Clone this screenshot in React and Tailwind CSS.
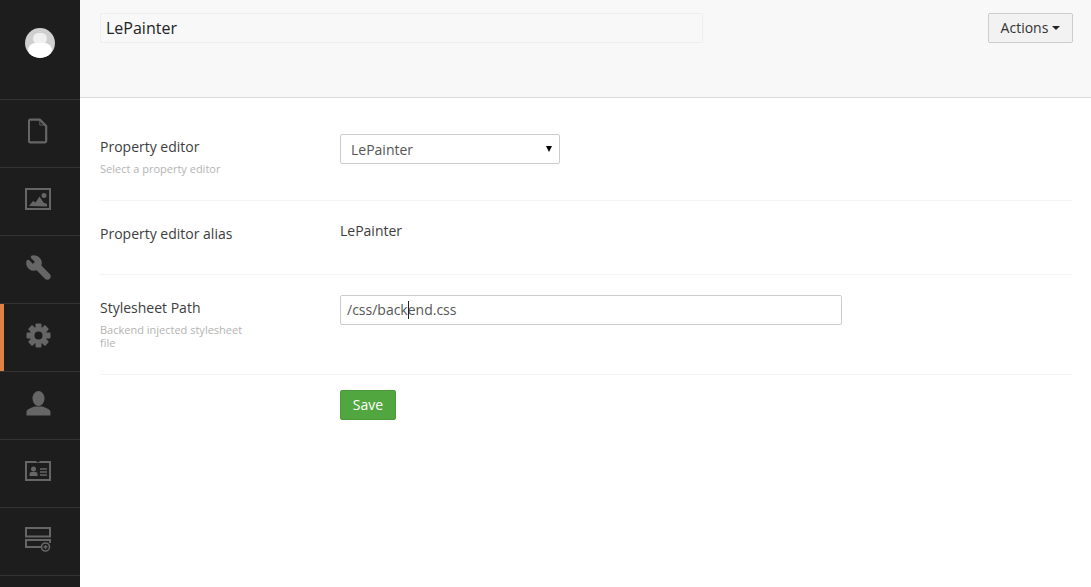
import React from "react";
import { Wrench } from "lucide-react";

const FileIcon = () => (
  <svg width="20" height="26" viewBox="0 0 22 28" fill="none" stroke="#666" strokeWidth="2.4">
    <path d="M2.500 1.500h10.500l7 7v16.500a1.500 1.500 0 0 1-1.500 1.500h-16a1.500 1.500 0 0 1-1.500-1.500v-22a1.500 1.500 0 0 1 1.500-1.500z" strokeLinejoin="round" />
    <path d="M13 2v5.500h6.500" strokeWidth="1" />
  </svg>
);

const ImageIcon = () => (
  <svg width="26" height="22" viewBox="0 0 26 22">
    <rect x="1" y="1" width="24" height="20" fill="none" stroke="#666" strokeWidth="2" />
    <circle cx="19" cy="7.500" r="2.500" fill="#666" />
    <path d="M4 18l4-5 2.500 1.500 4-6 4 6 3.500 1.500v2.500z" fill="#666" />
  </svg>
);

const CardIcon = () => (
  <svg width="26" height="20" viewBox="0 0 26 20">
    <rect x="1" y="1" width="24" height="18" fill="none" stroke="#666" strokeWidth="2" />
    <rect x="11.500" y="0" width="3" height="1.200" fill="#1d1d1d" />
    <circle cx="8.500" cy="8" r="2.500" fill="#666" />
    <path d="M4.500 15v-2a2 2 0 0 1 2-2h4a2 2 0 0 1 2 2v2z" fill="#666" />
    <path d="M15 8h7M15 11h7M15 14h7" stroke="#666" strokeWidth="1.600" />
  </svg>
);

const ServerAddIcon = () => (
  <svg width="26" height="25" viewBox="0 0 26 25">
    <rect x="1" y="1" width="24" height="8.500" fill="none" stroke="#666" strokeWidth="2" />
    <path d="M25 16v-3h-24v7h15" fill="none" stroke="#666" strokeWidth="2" />
    <circle cx="20.500" cy="20" r="4" fill="#1d1d1d" stroke="#666" strokeWidth="1.600" />
    <path d="M20.500 18v4M18.500 20h4" stroke="#666" strokeWidth="1.400" />
  </svg>
);

const GearIcon = () => (
  <svg width="25" height="25" viewBox="0 0 25 25" fill="#666">
    {[0, 45, 90, 135, 180, 225, 270, 315].map((deg) => (
      <rect key={deg} x="9.500" y="0.500" width="6" height="6" rx="1" transform={`rotate(${deg} 12.500 12.500)`} />
    ))}
    <circle cx="12.500" cy="12.500" r="8.500" />
    <circle cx="12.500" cy="12.500" r="4" fill="#1d1d1d" />
  </svg>
);

const PersonIcon = () => (
  <svg width="25" height="25" viewBox="0 0 25 25" fill="#666">
    <ellipse cx="12.500" cy="7.500" rx="6" ry="7.500" />
    <path d="M0.500 24.500v-3.500c0-3 5-4 8-5.500h8c3 1.500 8 2.500 8 5.500v3.500z" />
  </svg>
);

const navItems = [
  { icon: <FileIcon /> },
  { icon: <ImageIcon /> },
  { icon: <Wrench size={27} className="-scale-x-100" fill="#666" stroke="#666" strokeWidth={1.800} /> },
  { icon: <GearIcon />, active: true },
  { icon: <PersonIcon /> },
  { icon: <CardIcon /> },
  { icon: <ServerAddIcon /> },
];

function Sidebar() {
  return (
    <aside className="w-20 h-[587px] shrink-0 bg-[#1d1d1d] overflow-hidden">
      <div className="h-[99px] flex justify-center pt-[28px]">
        <div className="w-[30px] h-[30px] rounded-full bg-[#cfcfcf] overflow-hidden flex flex-col items-center">
          <div className="w-[14px] h-[14px] mt-[5px] rounded-full bg-[#f0f0f0]" />
          <div className="w-[24px] h-[20px] -mt-[1px] rounded-full bg-white" />
        </div>
      </div>
      {navItems.map((item, i) => (
        <div key={i} className="h-[68px] border-t border-[#333] flex">
          <div className={`w-1 ${item.active ? "bg-[#e08244]" : ""}`} />
          <div className="w-[68px] flex items-center justify-center pb-[5px]">{item.icon}</div>
        </div>
      ))}
      <div className="border-t border-[#333]" />
    </aside>
  );
}

function Row({ label, help, height, children }) {
  return (
    <div className={`flex border-b border-[#f4f4f4] ${height}`}>
      <div className="w-[240px] shrink-0">
        <div className="text-sm leading-5 text-[#3d3d3d]">{label}</div>
        {help && <div className="mt-[5px] w-[150px] text-[11px] leading-[13px] text-[#b3b3b3]">{help}</div>}
      </div>
      <div>{children}</div>
    </div>
  );
}

export default function App() {
  return (
    <div className="flex h-[587px] w-[1091px] overflow-hidden bg-white font-['Open_Sans',sans-serif]">
      <Sidebar />
      <main className="flex-1 min-w-0">
        <header className="h-[98px] bg-[#f8f8f8] border-b border-[#d9d9d9] pl-5 pr-[18px] pt-[13px] flex justify-between items-start">
          <input
            readOnly
            value="LePainter"
            className="w-[603px] h-[30px] border border-[#eeeeee] px-[5px] text-base text-[#222] outline-none"
          />
          <button className="h-[30px] w-[85px] flex items-center justify-center gap-1 border border-[#cccccc] rounded-[2px] bg-[#f2f2f2] text-sm text-[#333]">
            Actions
            <span className="w-0 h-0 border-x-[4px] border-x-transparent border-t-[4px] border-t-[#222]" />
          </button>
        </header>
        <div className="pl-5 pr-[19px]">
          <div className="pt-[39px]">
            <Row label="Property editor" help="Select a property editor" height="h-[64px]">
              <div className="relative -mt-[3px] w-[220px] h-[30px] border border-[#cccccc] rounded-[2px] bg-white flex items-center pl-[10px] pt-[2px] text-sm text-[#555]">
                LePainter
                <span className="absolute right-[7px] top-[11px] w-0 h-0 border-x-[3.500px] border-x-transparent border-t-[6px] border-t-black" />
              </div>
            </Row>
          </div>
          <div className="pt-[23px]">
            <Row label="Property editor alias" height="h-[51px]">
              <div className="-mt-[3px] text-sm leading-5 text-[#3d3d3d]">LePainter</div>
            </Row>
          </div>
          <div className="pt-[23px]">
            <Row label="Stylesheet Path" help="Backend injected stylesheet file" height="h-[77px]">
              <div className="relative -mt-[3px] w-[502px]">
                <input
                  readOnly
                  value="/css/backend.css"
                  className="w-full h-[30px] border border-[#cccccc] rounded-[2px] px-[6px] pb-[2px] text-sm text-[#555] outline-none"
                />
                <span className="absolute left-[68px] top-[6px] w-px h-[18px] bg-[#222]" />
              </div>
            </Row>
          </div>
          <div className="pt-[15px] pl-[240px]">
            <button className="h-[30px] w-14 bg-[#51a63f] border border-[#4a9a3a] rounded-[2px] text-sm text-white">Save</button>
          </div>
        </div>
      </main>
    </div>
  );
}
